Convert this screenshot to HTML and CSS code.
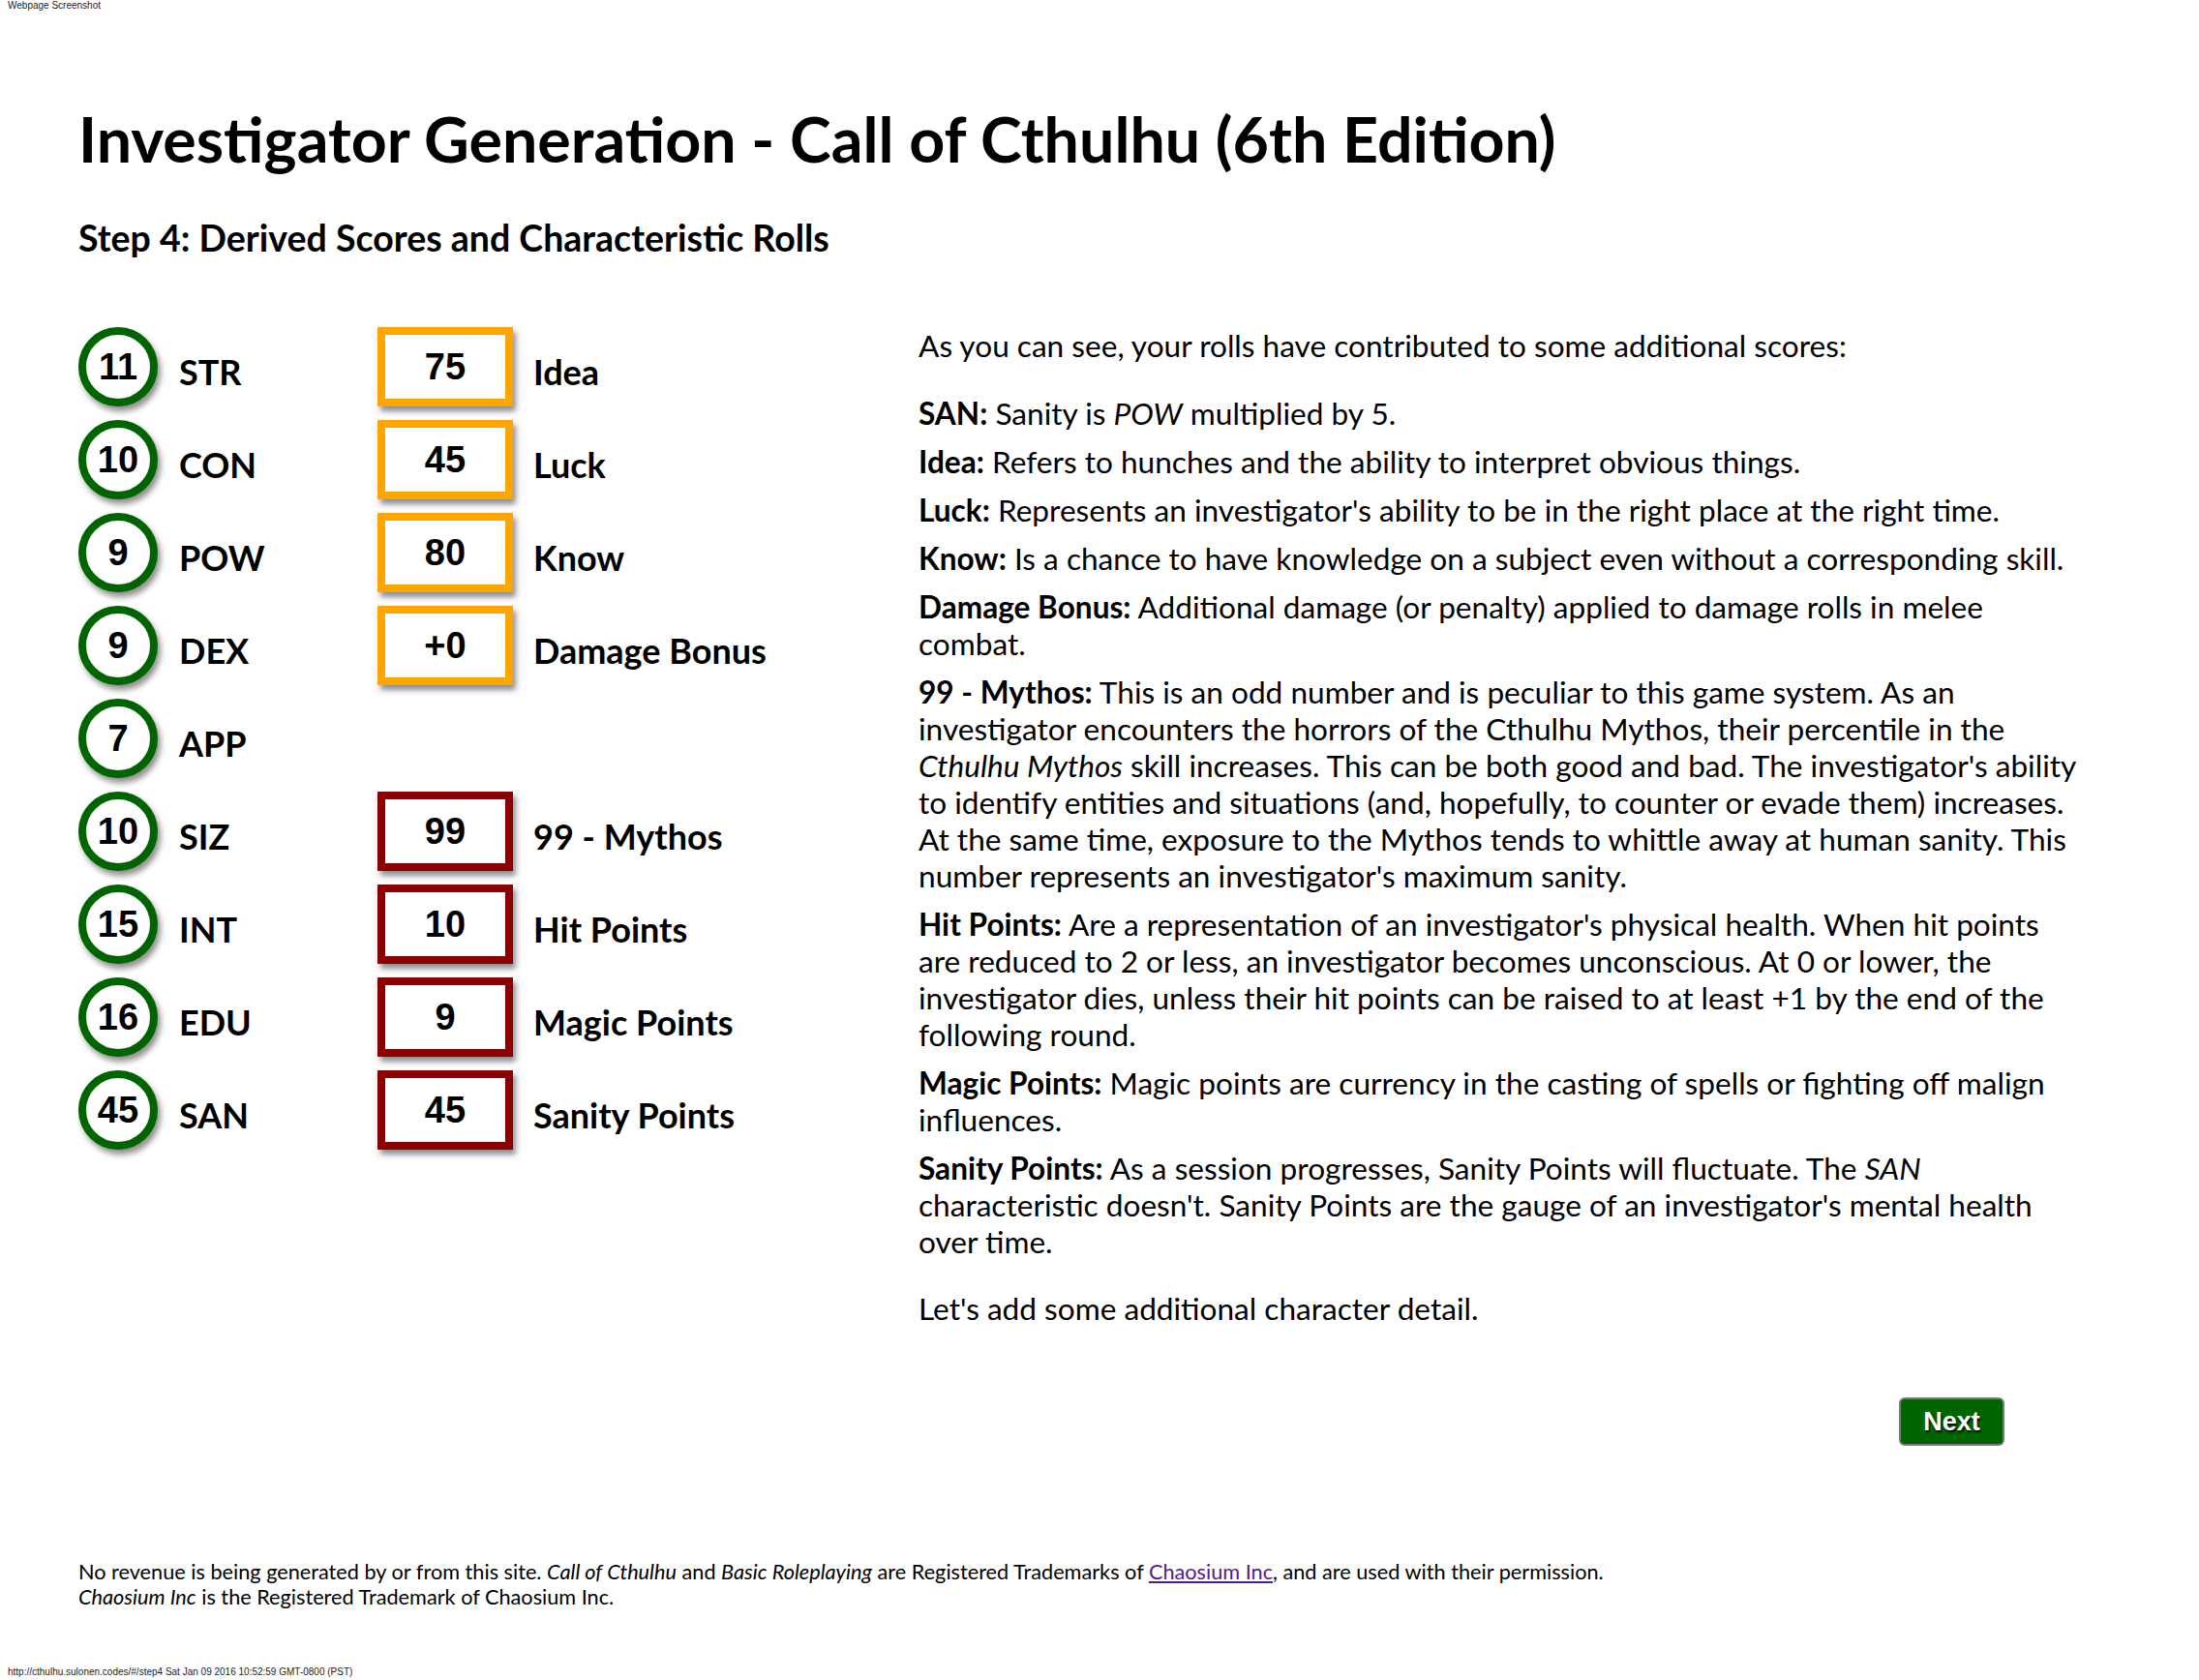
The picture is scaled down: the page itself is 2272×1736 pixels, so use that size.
FILE: index.html
```html
<!DOCTYPE html>
<html>
<head>
<meta charset="utf-8">
<title>Investigator Generation</title>
<link rel="stylesheet" href="styles.css">
</head>
<body>
<div class="shot-caption">Webpage Screenshot</div>
<div class="page">
  <h1 class="title">Investigator Generation - Call of Cthulhu (6th Edition)</h1>
  <h2 class="subtitle">Step 4: Derived Scores and Characteristic Rolls</h2>

  <div class="main">
    <div class="stats">
      <div class="chars">
        <div class="row"><div class="circle">11</div><div class="label">STR</div></div>
        <div class="row"><div class="circle">10</div><div class="label">CON</div></div>
        <div class="row"><div class="circle">9</div><div class="label">POW</div></div>
        <div class="row"><div class="circle">9</div><div class="label">DEX</div></div>
        <div class="row"><div class="circle">7</div><div class="label">APP</div></div>
        <div class="row"><div class="circle">10</div><div class="label">SIZ</div></div>
        <div class="row"><div class="circle">15</div><div class="label">INT</div></div>
        <div class="row"><div class="circle">16</div><div class="label">EDU</div></div>
        <div class="row"><div class="circle">45</div><div class="label">SAN</div></div>
      </div>
      <div class="derived">
        <div class="row"><div class="box orange">75</div><div class="label">Idea</div></div>
        <div class="row"><div class="box orange">45</div><div class="label">Luck</div></div>
        <div class="row"><div class="box orange">80</div><div class="label">Know</div></div>
        <div class="row"><div class="box orange">+0</div><div class="label">Damage Bonus</div></div>
        <div class="row empty"></div>
        <div class="row"><div class="box red">99</div><div class="label">99 - Mythos</div></div>
        <div class="row"><div class="box red">10</div><div class="label">Hit Points</div></div>
        <div class="row"><div class="box red">9</div><div class="label">Magic Points</div></div>
        <div class="row"><div class="box red">45</div><div class="label">Sanity Points</div></div>
      </div>
    </div>

    <div class="info">
      <p class="intro">As you can see, your rolls have contributed to some additional scores:</p>
      <p class="item"><b>SAN:</b> Sanity is <i>POW</i> multiplied by 5.</p>
      <p class="item"><b>Idea:</b> Refers to hunches and the ability to interpret obvious things.</p>
      <p class="item"><b>Luck:</b> Represents an investigator's ability to be in the right place at the right time.</p>
      <p class="item"><b>Know:</b> Is a chance to have knowledge on a subject even without a corresponding skill.</p>
      <p class="item"><b>Damage Bonus:</b> Additional damage (or penalty) applied to damage rolls in melee combat.</p>
      <p class="item"><b>99 - Mythos:</b> This is an odd number and is peculiar to this game system. As an investigator encounters the horrors of the Cthulhu Mythos, their percentile in the <i>Cthulhu Mythos</i> skill increases. This can be both good and bad. The investigator's ability to identify entities and situations (and, hopefully, to counter or evade them) increases. At the same time, exposure to the Mythos tends to whittle away at human sanity. This number represents an investigator's maximum sanity.</p>
      <p class="item"><b>Hit Points:</b> Are a representation of an investigator's physical health. When hit points are reduced to 2 or less, an investigator becomes unconscious. At 0 or lower, the investigator dies, unless their hit points can be raised to at least +1 by the end of the following round.</p>
      <p class="item"><b>Magic Points:</b> Magic points are currency in the casting of spells or fighting off malign influences.</p>
      <p class="item"><b>Sanity Points:</b> As a session progresses, Sanity Points will fluctuate. The <i>SAN</i> characteristic doesn't. Sanity Points are the gauge of an investigator's mental health over time.</p>
      <p class="outro">Let's add some additional character detail.</p>
    </div>
  </div>

  <div class="actions">
    <button class="next">Next</button>
  </div>

  <footer class="footer">
    <p>No revenue is being generated by or from this site. <i>Call of Cthulhu</i> and <i>Basic Roleplaying</i> are Registered Trademarks of <a href="#">Chaosium Inc</a>, and are used with their permission.<br><i>Chaosium Inc</i> is the Registered Trademark of Chaosium Inc.</p>
  </footer>
</div>
<div class="shot-url">http://cthulhu.sulonen.codes/#/step4 Sat Jan 09 2016 10:52:59 GMT-0800 (PST)</div>
</body>
</html>
```

FILE: styles.css
```css
html, body {
  margin: 0;
  padding: 0;
  background: #fff;
}
body {
  font-family: Lato, "Liberation Sans", sans-serif;
  color: #000;
  width: 2272px;
  height: 1736px;
  position: relative;
  overflow: hidden;
}
.shot-caption {
  font-family: "Liberation Sans", Arial, sans-serif;
  font-size: 10px;
  line-height: 12px;
  color: #222;
  padding-left: 8px;
  height: 12px;
}
.shot-url {
  position: absolute;
  left: 8px;
  bottom: 2px;
  font-family: "Liberation Sans", Arial, sans-serif;
  font-size: 10px;
  line-height: 12px;
  color: #222;
}
.page {
  padding-left: 81px;
}
.title {
  margin: 93px 0 0 0;
  font-size: 64.5px;
  font-weight: 700;
  line-height: 77px;
}
.subtitle {
  margin: 42px 0 0 0;
  font-size: 37.5px;
  font-weight: 700;
  line-height: 44px;
}
.main {
  display: flex;
  margin-top: 70px;
}
.stats {
  display: flex;
  width: 868px;
  flex: none;
}
.chars {
  width: 309px;
  display: flex;
  flex-direction: column;
  gap: 14px;
}
.derived {
  display: flex;
  flex-direction: column;
  gap: 14px;
}
.row {
  display: flex;
  align-items: center;
  height: 82px;
}
.circle {
  width: 82px;
  height: 82px;
  box-sizing: border-box;
  border: 8px solid #006400;
  border-radius: 50%;
  display: flex;
  align-items: center;
  justify-content: center;
  font-family: "Liberation Sans", Arial, sans-serif;
  font-weight: 700;
  font-size: 38px;
  box-shadow: 3px 5px 6px rgba(0,0,0,0.45);
  background: #fff;
}
.chars .label {
  margin-left: 22px;
}
.label {
  font-size: 36px;
  font-weight: 700;
  line-height: 43px;
  padding-top: 10px;
}
.box {
  width: 140px;
  height: 82px;
  box-sizing: border-box;
  border: 8px solid;
  display: flex;
  align-items: center;
  justify-content: center;
  font-family: "Liberation Sans", Arial, sans-serif;
  font-weight: 700;
  font-size: 38px;
  box-shadow: 3px 5px 6px rgba(0,0,0,0.45);
  background: #fff;
}
.box.orange { border-color: #ffa500; }
.box.red { border-color: #8b0000; }
.derived .label {
  margin-left: 21px;
}
.info {
  width: 1205px;
  font-size: 31.6px;
  line-height: 38px;
}
.info p {
  margin: 0;
}
.info .intro {
  margin-bottom: 32px;
}
.info .item {
  margin-bottom: 12px;
}
.info .outro {
  margin-top: 31px;
}
.info b {
  font-weight: 700;
}
.actions {
  display: flex;
  justify-content: flex-end;
  padding-right: 201px;
  margin-top: 73px;
}
.next {
  width: 109px;
  height: 50px;
  background: #006400;
  border: 2px solid #7a7a7a;
  border-radius: 6px;
  color: #fff;
  font-family: "Liberation Sans", Arial, sans-serif;
  font-weight: 700;
  font-size: 27px;
  text-shadow: 1px 2px 2px #000;
  padding: 0;
}
.footer {
  margin-top: 117px;
  font-size: 21.7px;
  line-height: 26px;
}
.footer p {
  margin: 0;
}
.footer a {
  color: #551a8b;
}
```
